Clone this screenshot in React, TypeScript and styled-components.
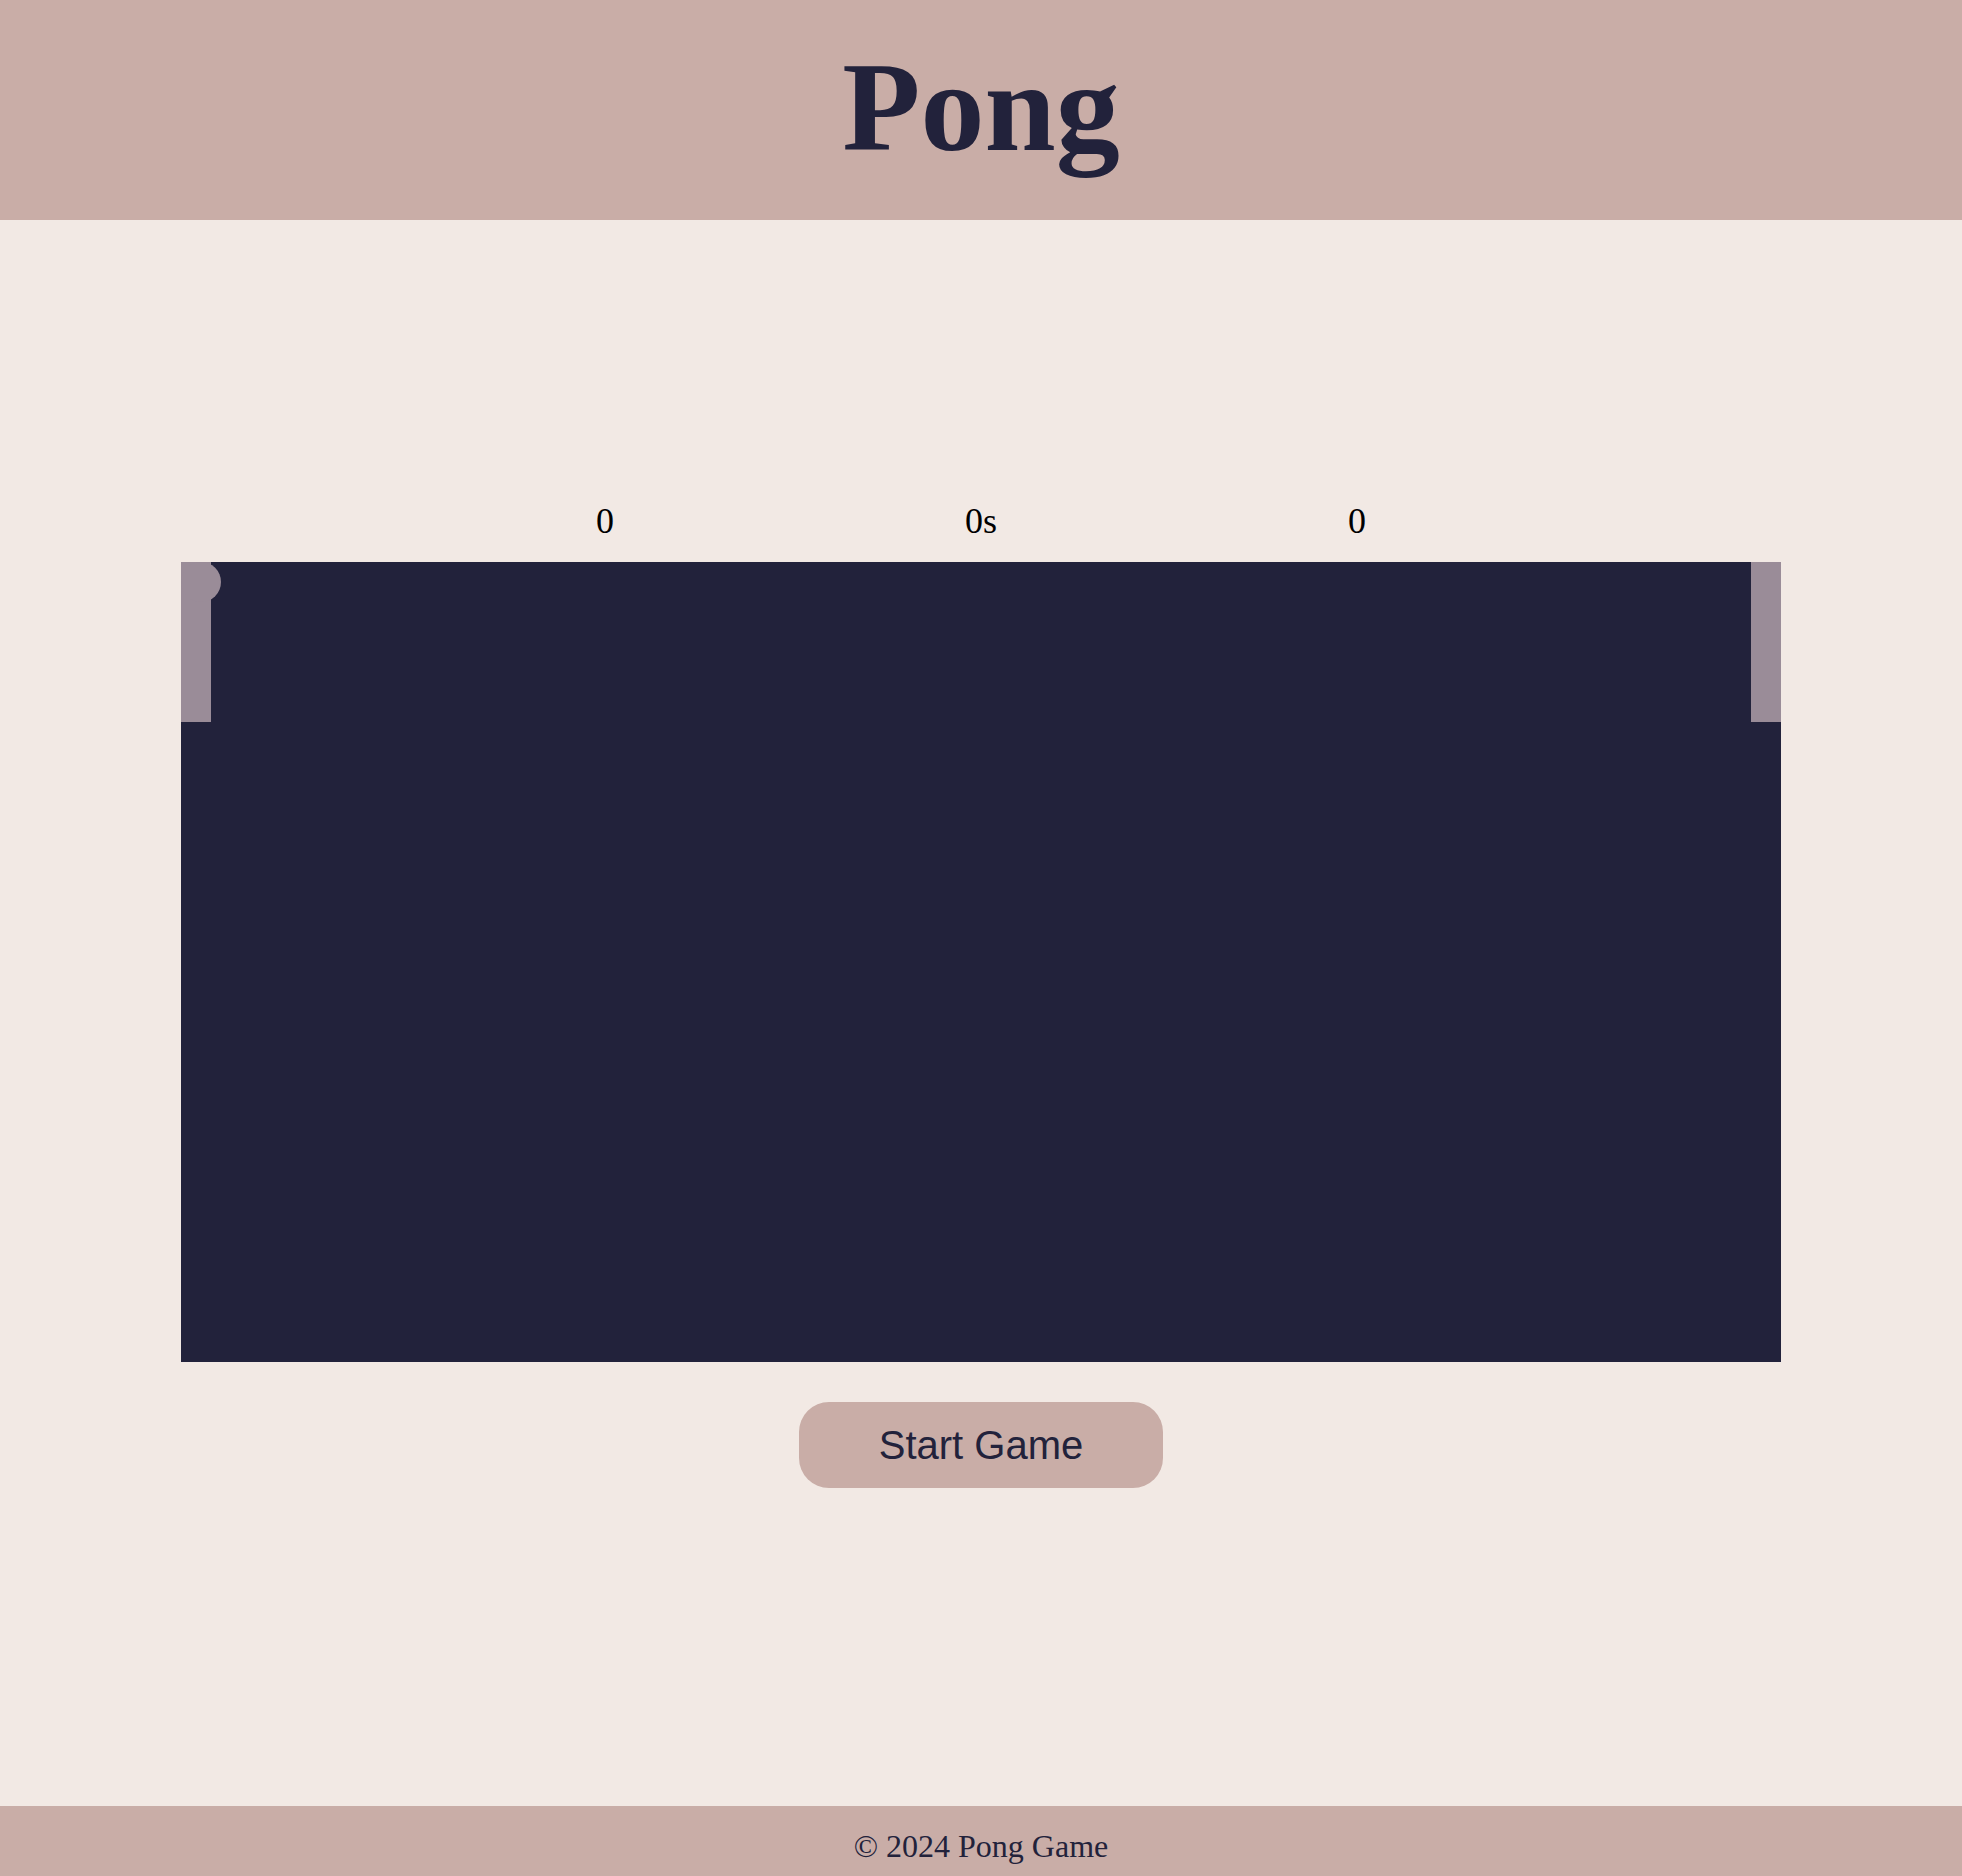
import React from "react";
import styled, { createGlobalStyle } from "styled-components";

const GlobalStyle = createGlobalStyle`
  html, body {
    margin: 0;
    padding: 0;
  }
  body {
    background: #f2e9e4;
    font-family: "Liberation Serif", "Times New Roman", serif;
  }
`;

const Page = styled.div`
  min-height: 100vh;
  display: flex;
  flex-direction: column;
`;

const Header = styled.header`
  background: #c9ada7;
  padding: 34px 0 39px;
  text-align: center;
`;

const Title = styled.h1`
  margin: 0;
  font-family: "Liberation Serif", "Times New Roman", serif;
  font-weight: 700;
  font-size: 128px;
  line-height: 147px;
  color: #22223b;
`;

const Main = styled.main`
  flex: 1;
  display: flex;
  flex-direction: column;
  align-items: center;
  justify-content: center;
`;

const ScoreBoard = styled.div`
  display: grid;
  grid-template-columns: repeat(3, 376px);
  margin-bottom: 20px;
`;

const ScoreItem = styled.div`
  text-align: center;
  font-family: "Liberation Serif", "Times New Roman", serif;
  font-size: 36px;
  line-height: 41px;
  color: #000;
`;

const Court = styled.div`
  position: relative;
  width: 1600px;
  height: 800px;
  background: #22223b;
  overflow: hidden;
`;

const Paddle = styled.div<{ $side: "left" | "right" }>`
  position: absolute;
  top: 0;
  ${(p) => (p.$side === "left" ? "left: 0;" : "right: 0;")}
  width: 30px;
  height: 160px;
  background: #9a8c98;
`;

const Ball = styled.div`
  position: absolute;
  top: 0;
  left: 0;
  width: 40px;
  height: 40px;
  border-radius: 50%;
  background: #9a8c98;
`;

const StartButton = styled.button`
  margin-top: 40px;
  margin-bottom: 38px;
  padding: 20px 80px;
  border: none;
  border-radius: 30px;
  background: #c9ada7;
  color: #22223b;
  font-family: "Liberation Sans", Arial, sans-serif;
  font-size: 40px;
  line-height: 46px;
  cursor: pointer;
`;

const Footer = styled.footer`
  background: #c9ada7;
  padding: 22px 0 11px;
  text-align: center;
`;

const FooterText = styled.p`
  margin: 0;
  font-family: "Liberation Serif", "Times New Roman", serif;
  font-size: 32px;
  line-height: 37px;
  color: #22223b;
`;

export default function App() {
  return (
    <>
      <GlobalStyle />
      <Page>
        <Header>
          <Title>Pong</Title>
        </Header>
        <Main>
          <ScoreBoard>
            <ScoreItem>0</ScoreItem>
            <ScoreItem>0s</ScoreItem>
            <ScoreItem>0</ScoreItem>
          </ScoreBoard>
          <Court>
            <Paddle $side="left" />
            <Paddle $side="right" />
            <Ball />
          </Court>
          <StartButton>Start Game</StartButton>
        </Main>
        <Footer>
          <FooterText>© 2024 Pong Game</FooterText>
        </Footer>
      </Page>
    </>
  );
}
